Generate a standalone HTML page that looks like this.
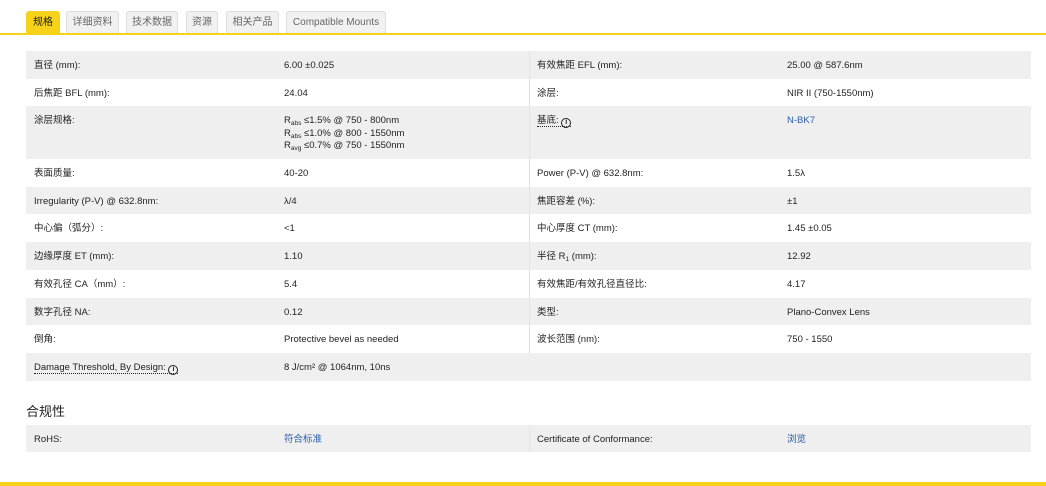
<!DOCTYPE html>
<html><head><meta charset="utf-8"><style>
*{margin:0;padding:0;box-sizing:border-box}
body{width:1046px;height:486px;background:#fff;font-family:"Liberation Sans","Noto Sans CJK SC",sans-serif;color:#222;font-size:9.5px;position:relative;overflow:hidden}
.tab{position:absolute;top:11px;height:23px;background:#f1f1f1;border:1px solid #ddd;border-bottom:none;border-radius:3px 3px 0 0;font-size:10px;color:#666;line-height:22px;text-align:center}
.tab.on{background:#f7d21a;border-color:#f7d21a;color:#222}
.topline{position:absolute;left:0;top:33px;width:1046px;height:2px;background:#f7d21a}
.row{position:absolute;left:26px;width:1005px}
.g{background:#efefef}
.c{position:absolute;top:9px;white-space:nowrap;line-height:12px;height:12px}
.div{position:absolute;left:503px;top:0;bottom:0;width:1px;background:#ddd}
.g .div{background:#e6e6e6}
a{color:#2a5ca8;text-decoration:none}
.u{border-bottom:1px dotted #222}
.i{display:inline-block;width:10px;height:10px;border:1.5px solid #222;border-radius:50%;font-size:7px;line-height:7px;text-align:center;font-weight:bold;vertical-align:-1px;font-family:"Liberation Sans",sans-serif}
sub{font-size:6.5px;line-height:0;vertical-align:-2px}
h3{position:absolute;left:26px;top:404px;font-size:13px;font-weight:normal;color:#222;line-height:16px}
.bot{position:absolute;left:0;top:482px;width:1046px;height:4px;background:#f7d21a}
</style></head><body>
<div class="tab on" style="left:26px;width:34px">规格</div>
<div class="tab" style="left:66px;width:53px">详细资料</div>
<div class="tab" style="left:126px;width:52px">技术数据</div>
<div class="tab" style="left:186px;width:32px">资源</div>
<div class="tab" style="left:226px;width:53px">相关产品</div>
<div class="tab" style="left:286px;width:100px">Compatible Mounts</div>
<div class="topline"></div>

<div class="row g" style="top:51px;height:28px"><div class="div"></div><span class="c" style="left:8px">直径 (mm):</span><span class="c" style="left:258px">6.00 ±0.025</span><span class="c" style="left:511px">有效焦距 EFL (mm):</span><span class="c" style="left:761px">25.00 @ 587.6nm</span></div>
<div class="row" style="top:79px;height:27px"><div class="div"></div><span class="c" style="left:8px">后焦距 BFL (mm):</span><span class="c" style="left:258px">24.04</span><span class="c" style="left:511px">涂层:</span><span class="c" style="left:761px">NIR II (750-1550nm)</span></div>
<div class="row g" style="top:106px;height:53px"><div class="div"></div><span class="c" style="left:8px">涂层规格:</span><span class="c" style="left:258px;height:auto;line-height:12.5px">R<sub>abs</sub> ≤1.5% @ 750 - 800nm<br>R<sub>abs</sub> ≤1.0% @ 800 - 1550nm<br>R<sub>avg</sub> ≤0.7% @ 750 - 1550nm</span><span class="c" style="left:511px"><span class="u">基底: <span class="i">i</span></span></span><span class="c" style="left:761px"><a>N-BK7</a></span></div>
<div class="row" style="top:159px;height:28px"><div class="div"></div><span class="c" style="left:8px">表面质量:</span><span class="c" style="left:258px">40-20</span><span class="c" style="left:511px">Power (P-V) @ 632.8nm:</span><span class="c" style="left:761px">1.5λ</span></div>
<div class="row g" style="top:187px;height:27px"><div class="div"></div><span class="c" style="left:8px">Irregularity (P-V) @ 632.8nm:</span><span class="c" style="left:258px">λ/4</span><span class="c" style="left:511px">焦距容差 (%):</span><span class="c" style="left:761px">±1</span></div>
<div class="row" style="top:214px;height:28px"><div class="div"></div><span class="c" style="left:8px">中心偏（弧分）:</span><span class="c" style="left:258px">&lt;1</span><span class="c" style="left:511px">中心厚度 CT (mm):</span><span class="c" style="left:761px">1.45 ±0.05</span></div>
<div class="row g" style="top:242px;height:28px"><div class="div"></div><span class="c" style="left:8px">边缘厚度 ET (mm):</span><span class="c" style="left:258px">1.10</span><span class="c" style="left:511px">半径 R<sub>1</sub> (mm):</span><span class="c" style="left:761px">12.92</span></div>
<div class="row" style="top:270px;height:28px"><div class="div"></div><span class="c" style="left:8px">有效孔径 CA（mm）:</span><span class="c" style="left:258px">5.4</span><span class="c" style="left:511px">有效焦距/有效孔径直径比:</span><span class="c" style="left:761px">4.17</span></div>
<div class="row g" style="top:298px;height:27px"><div class="div"></div><span class="c" style="left:8px">数字孔径 NA:</span><span class="c" style="left:258px">0.12</span><span class="c" style="left:511px">类型:</span><span class="c" style="left:761px">Plano-Convex Lens</span></div>
<div class="row" style="top:325px;height:28px"><div class="div"></div><span class="c" style="left:8px">倒角:</span><span class="c" style="left:258px">Protective bevel as needed</span><span class="c" style="left:511px">波长范围 (nm):</span><span class="c" style="left:761px">750 - 1550</span></div>
<div class="row g" style="top:353px;height:28px"><span class="c" style="left:8px"><span class="u">Damage Threshold, By Design: <span class="i">i</span></span></span><span class="c" style="left:258px">8 J/cm² @ 1064nm, 10ns</span></div>

<h3>合规性</h3>
<div class="row g" style="top:425px;height:27px"><div class="div"></div><span class="c" style="left:8px">RoHS:</span><span class="c" style="left:258px"><a>符合标准</a></span><span class="c" style="left:511px">Certificate of Conformance:</span><span class="c" style="left:761px"><a>浏览</a></span></div>
<div class="bot"></div>
</body></html>
